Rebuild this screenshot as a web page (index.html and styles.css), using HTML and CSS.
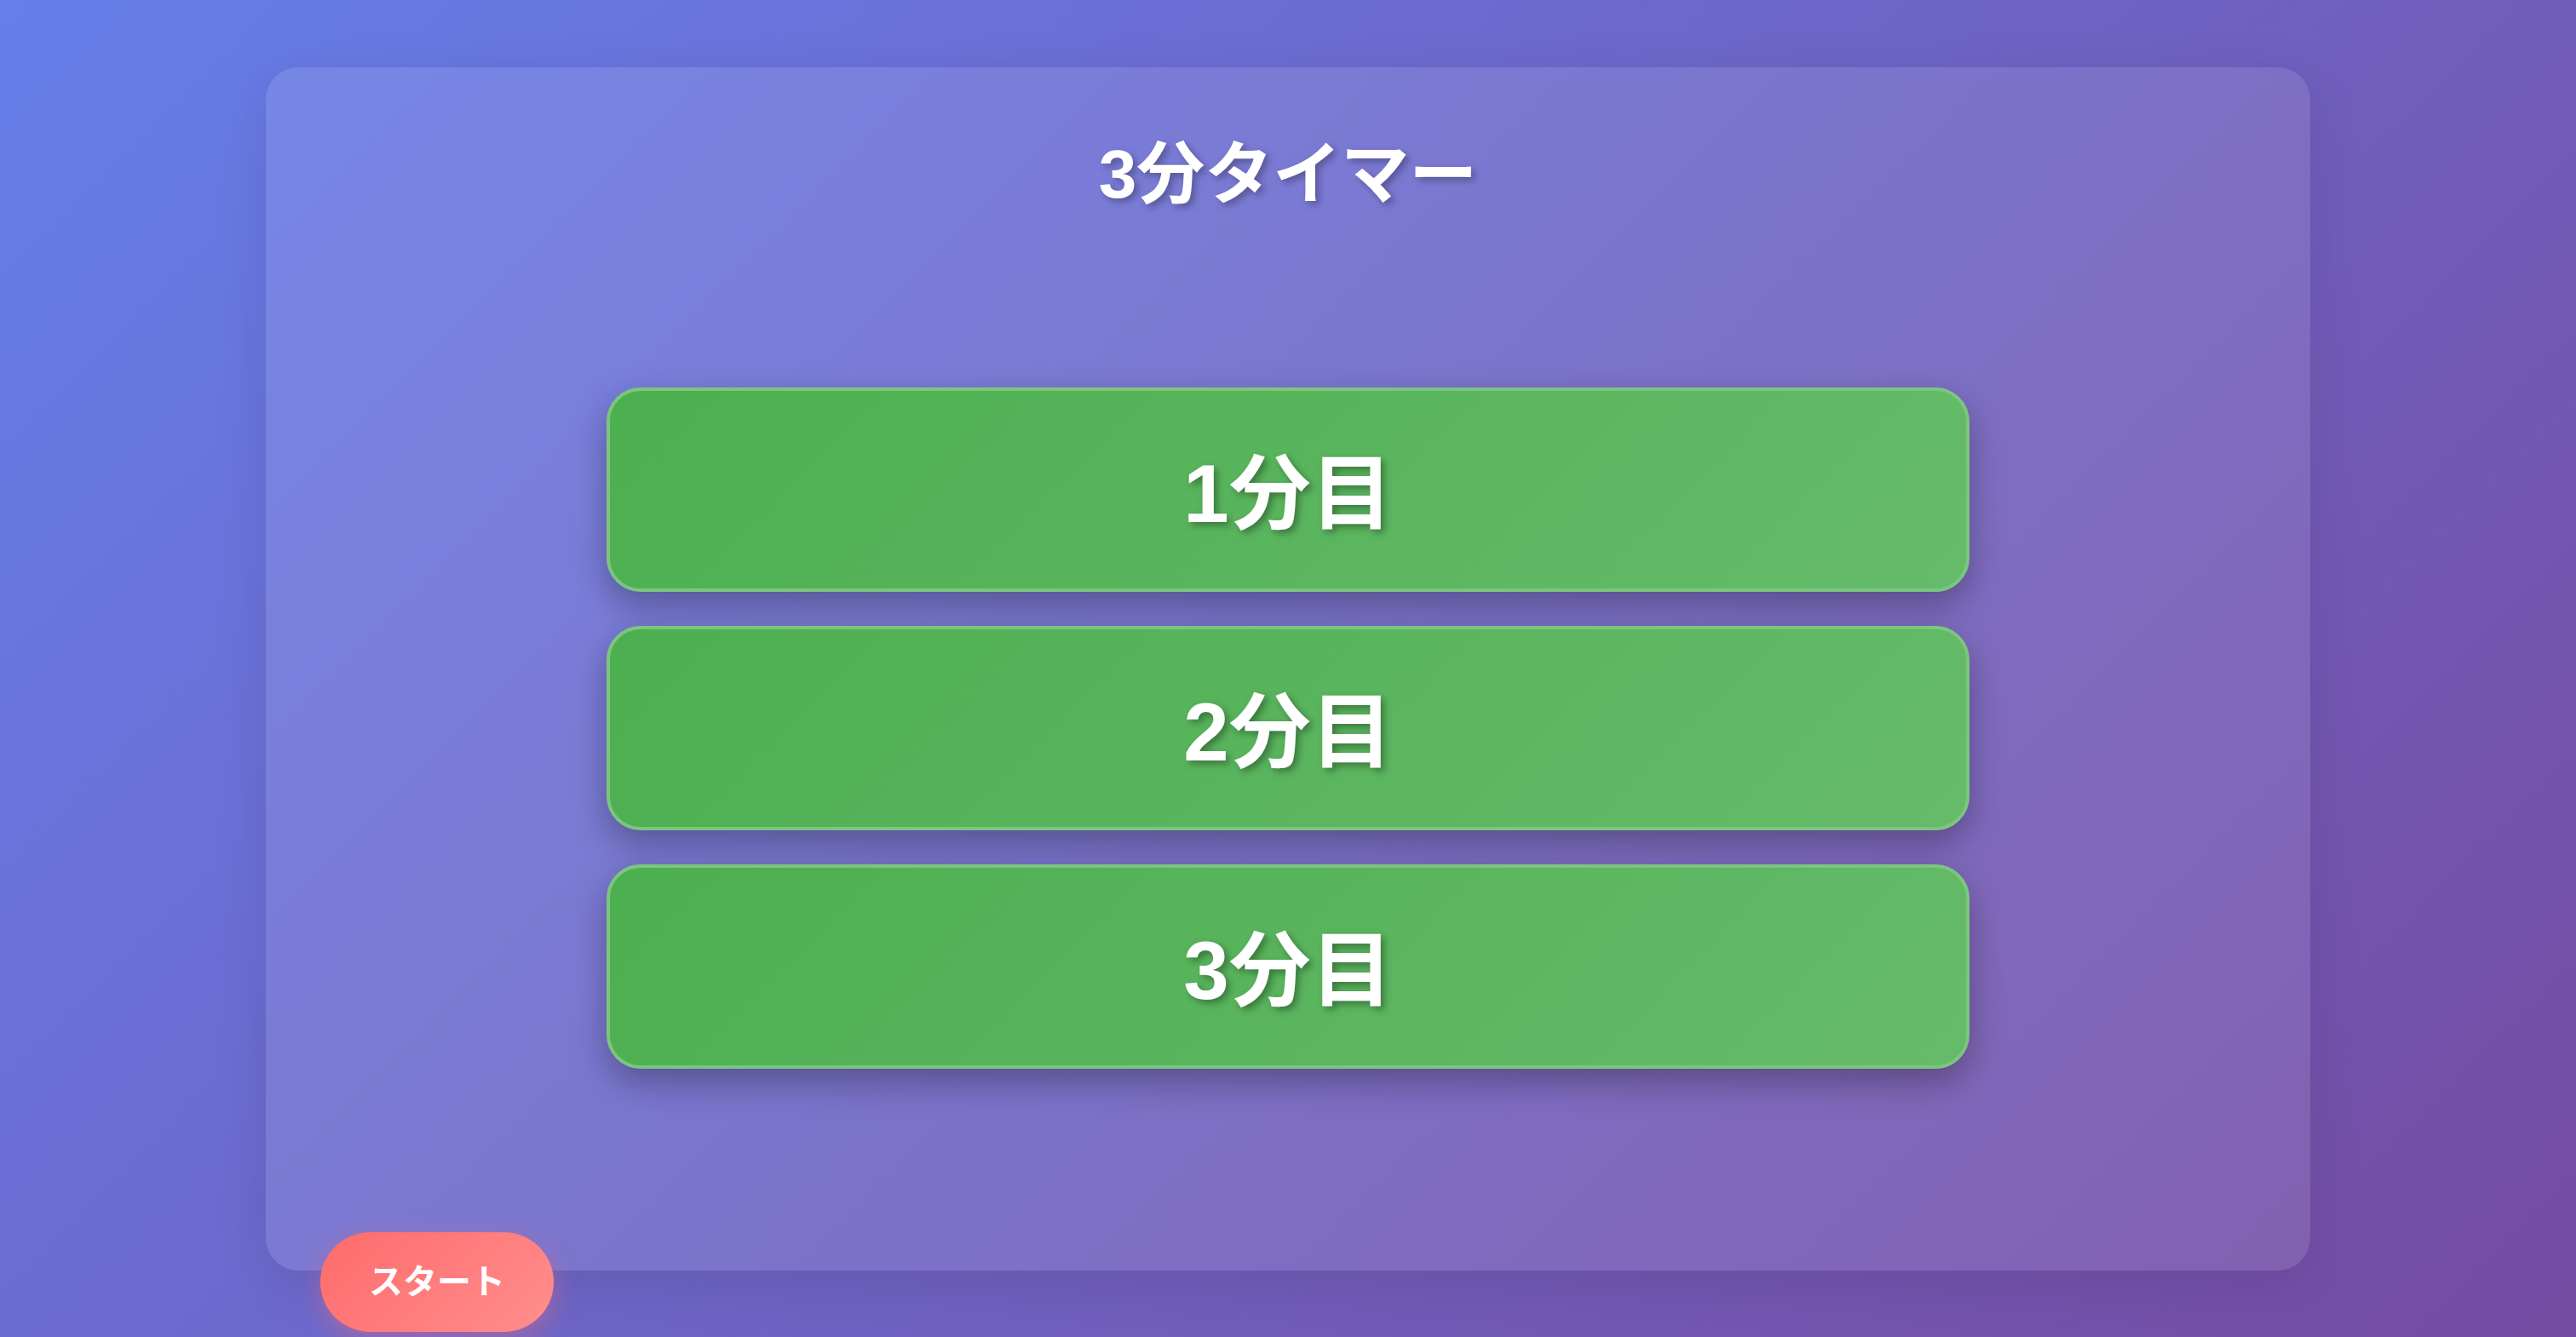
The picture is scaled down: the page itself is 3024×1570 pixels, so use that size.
FILE: index.html
```html
<!DOCTYPE html>
<html lang="ja">
<head>
<meta charset="utf-8">
<title>3分タイマー</title>
<link rel="stylesheet" href="styles.css">
</head>
<body>
<div class="page">
  <main class="card">
    <h1 class="title">3分タイマー</h1>
    <div class="segments">
      <div class="segment">1分目</div>
      <div class="segment">2分目</div>
      <div class="segment">3分目</div>
    </div>
  </main>
  <button class="start">スタート</button>
</div>
</body>
</html>
```

FILE: styles.css
```css
html, body {
  margin: 0;
  padding: 0;
  height: 100%;
}
body {
  background: linear-gradient(135deg, #667eea 0%, #764ba2 100%);
  font-family: "Liberation Sans", "Noto Sans CJK JP", sans-serif;
  color: #fff;
  overflow: hidden;
}
.page {
  position: relative;
  height: 1570px;
  padding-top: 79px;
  box-sizing: border-box;
}
.card {
  width: 2400px;
  height: 1413px;
  margin: 0 auto;
  box-sizing: border-box;
  padding-top: 61px;
  background: rgba(255, 255, 255, 0.1);
  border-radius: 38px;
  box-shadow: 0 16px 64px rgba(0, 0, 0, 0.1);
  display: flex;
  flex-direction: column;
  align-items: center;
}
.title {
  margin: 0;
  font-size: 80px;
  font-weight: 700;
  line-height: 116px;
  padding-top: 7px;
  text-shadow: 4px 4px 8px rgba(0, 0, 0, 0.3);
}
.segments {
  margin-top: 192px;
  display: flex;
  flex-direction: column;
  gap: 40px;
}
.segment {
  width: 1600px;
  height: 240px;
  box-sizing: border-box;
  border: 4px solid #7cc57f;
  border-radius: 40px;
  background: linear-gradient(135deg, #4caf50 0%, #66bb6a 100%);
  box-shadow: 0 16px 40px rgba(0, 0, 0, 0.3);
  display: flex;
  align-items: center;
  justify-content: center;
  padding-top: 8px;
  font-size: 96px;
  font-weight: 700;
  line-height: 139px;
  text-shadow: 4px 4px 8px rgba(0, 0, 0, 0.35);
}
.start {
  position: absolute;
  left: 376px;
  top: 1447px;
  width: 274px;
  height: 117px;
  padding: 0;
  border: none;
  border-radius: 60px;
  background: linear-gradient(135deg, #ff6b6b 0%, #ff8e8e 100%);
  box-shadow: 0 8px 30px rgba(255, 107, 107, 0.4);
  color: #fff;
  font-family: "Liberation Sans", "Noto Sans CJK JP", sans-serif;
  font-size: 40px;
  font-weight: 700;
  line-height: 57px;
}
```
